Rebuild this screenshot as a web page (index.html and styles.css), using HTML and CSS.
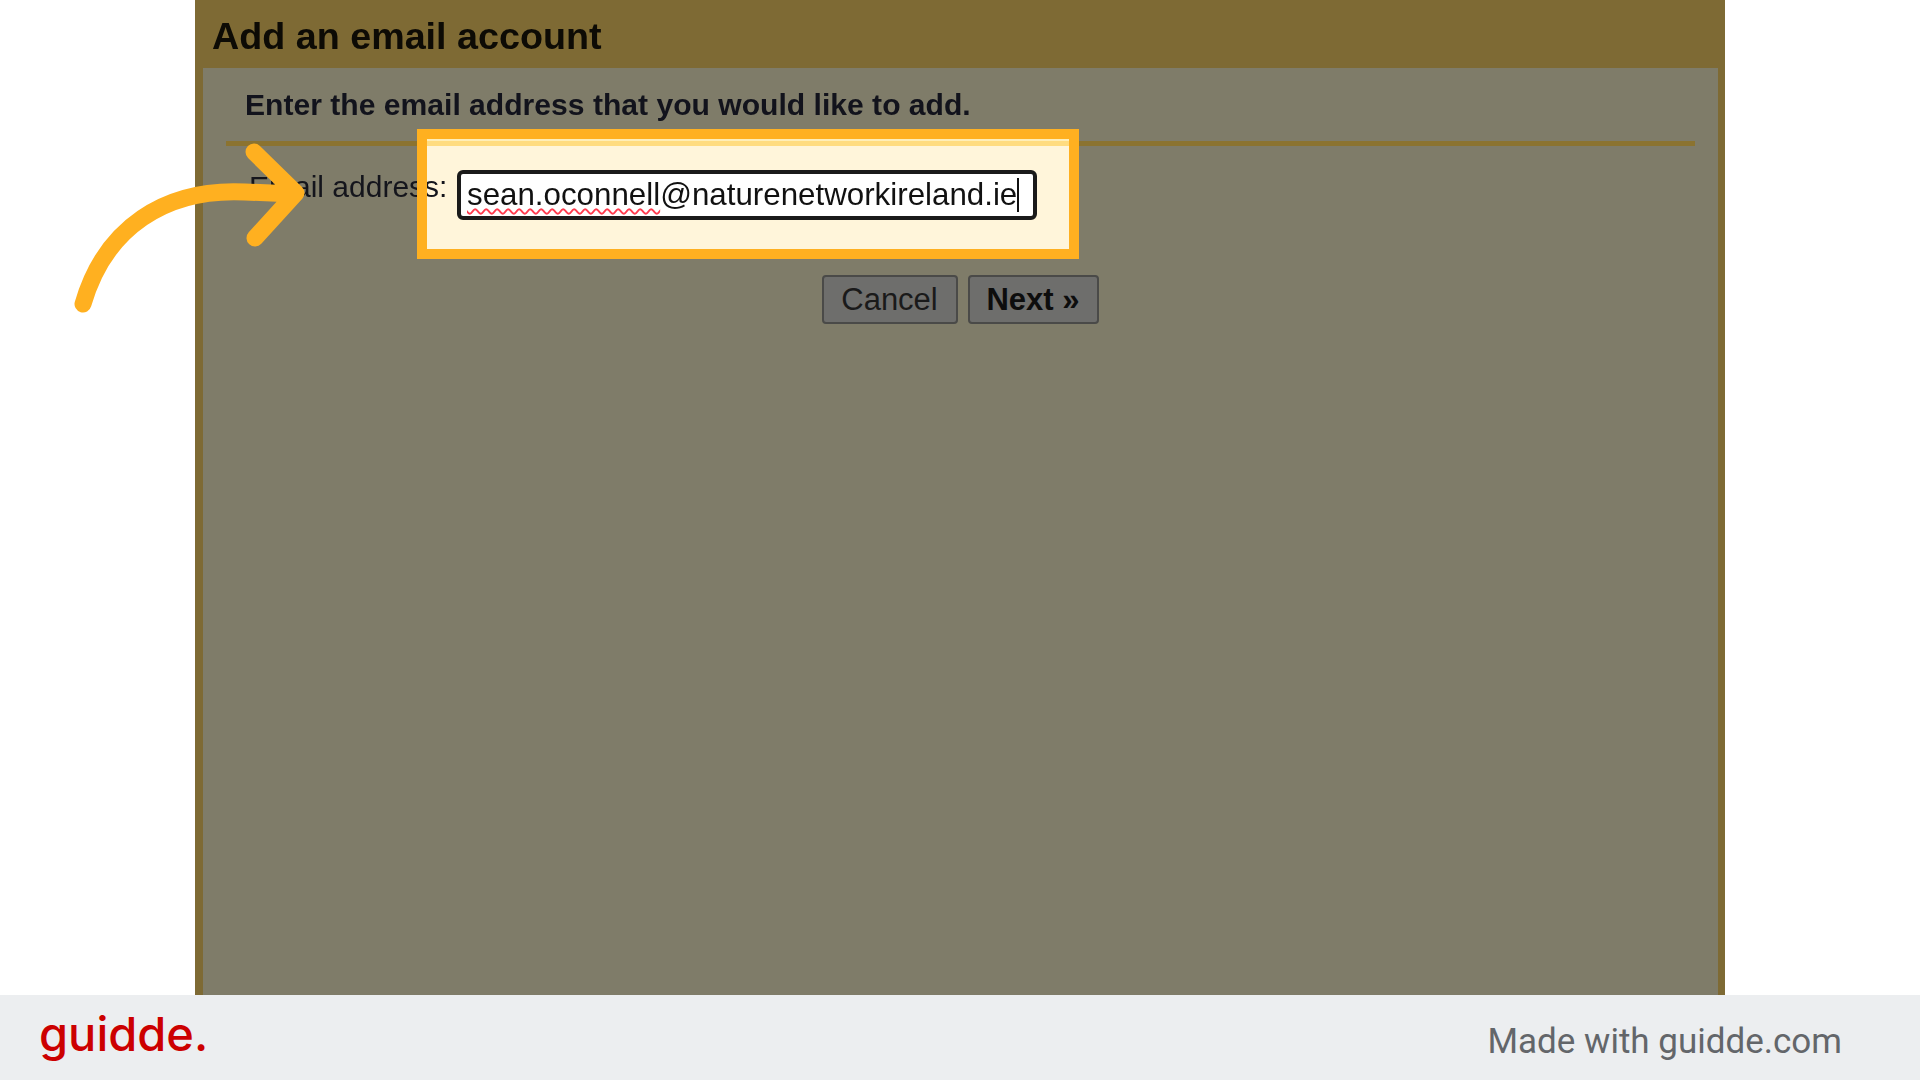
FILE: index.html
```html
<!DOCTYPE html>
<html lang="en">
<head>
<meta charset="utf-8">
<title>Add an email account</title>
<link rel="stylesheet" href="styles.css">
</head>
<body>
<main class="stage">
  <section class="panel">
    <h1 class="panel-title">Add an email account</h1>
    <div class="panel-body">
      <p class="intro">Enter the email address that you would like to add.</p>
      <hr class="rule">
      <div class="form-row">
        <label class="field-label">Email address:</label>
        <div class="field"><span class="typo">sean.oconnell</span>@naturenetworkireland.ie<span class="caret"></span></div>
      </div>
      <div class="actions">
        <button class="btn" type="button">Cancel</button>
        <button class="btn btn-primary" type="button">Next »</button>
      </div>
      <div class="spot"><div class="spot-line"></div></div>
    </div>
  </section>
  <svg class="arrow" width="320" height="320" viewBox="0 0 320 320" aria-hidden="true">
    <path d="M83 304C105 228 165 188 245 192L294 194M254 152L296 193L255 238"/>
  </svg>
</main>
<footer class="footer">
  <span class="logo">guidde.</span>
  <span class="credit">Made with guidde.com</span>
</footer>
</body>
</html>
```
FILE: styles.css
```css
* { box-sizing: border-box; }
html, body { margin: 0; height: 100%; }
body {
  width: 1920px;
  height: 1080px;
  overflow: hidden;
  display: flex;
  flex-direction: column;
  background: #fff;
  font-family: "Liberation Sans", Arial, sans-serif;
}
.stage {
  flex: 0 0 995px;
  position: relative;
  padding: 0 195px;
}
.panel {
  width: 1530px;
  height: 995px;
  display: flex;
  flex-direction: column;
  background: #7e6a34;
  padding: 0 7px 0 8px;
}
.panel-title {
  flex: 0 0 68px;
  margin: 0 -8px;
  padding: 4px 0 0 17px;
  display: flex;
  align-items: center;
  font-size: 37.7px;
  font-weight: 700;
  color: #0d0b05;
  filter: blur(0.4px);
}
.panel-body {
  flex: 1;
  position: relative;
  background: #7f7c69;
  padding: 20px 23px 0;
}
.intro {
  margin: 0 0 0 19px;
  font-size: 30.1px;
  font-weight: 700;
  line-height: 34px;
  color: #12131c;
  filter: blur(0.4px);
}
.rule {
  margin: 19px 0 0;
  height: 5px;
  border: 0;
  background: #8b7330;
}
.form-row {
  display: flex;
  align-items: flex-start;
  margin-top: 24px;
  padding-left: 23px;
}
.field-label {
  position: relative;
  z-index: 2;
  width: 208px;
  font-size: 30px;
  line-height: 34px;
  color: #14151c;
  filter: blur(0.4px);
}
.field {
  position: relative;
  z-index: 2;
  width: 580px;
  height: 50px;
  padding-left: 6px;
  display: flex;
  align-items: center;
  border: 4px solid #1a1a1a;
  border-radius: 6px;
  background: #fff;
  font-size: 31.3px;
  color: #111;
  white-space: nowrap;
  filter: blur(0.3px);
}
.typo {
  text-decoration: underline wavy #ff3b4e 2px;
  text-underline-offset: 3px;
}
.caret {
  width: 2px;
  height: 34px;
  background: #111;
}
.actions {
  display: flex;
  justify-content: center;
  gap: 10px;
  margin-top: 55px;
}
.btn {
  height: 49px;
  padding: 0 1px 0 0;
  border: 2px solid #4a4a48;
  border-radius: 4px;
  background: #6e6e6c;
  font-family: inherit;
  font-size: 31px;
  color: #1a1a1a;
  width: 136px;
}
.btn-primary {
  width: 131px;
  font-weight: 700;
  color: #0d0d0d;
}
.spot {
  position: absolute;
  left: 214px;
  top: 61px;
  width: 662px;
  height: 130px;
}
.spot::before {
  content: "";
  position: absolute;
  inset: 0;
  z-index: 1;
  background: #fff5da;
}
.spot::after {
  content: "";
  position: absolute;
  inset: 0;
  z-index: 3;
  border: 10px solid #ffb020;
}
.spot-line {
  position: absolute;
  z-index: 2;
  left: 0;
  right: 0;
  top: 10px;
  height: 7px;
  background: #ffdc80;
  border-top: 2px solid #ffeeb8;
}
.arrow {
  position: absolute;
  left: 0;
  top: 0;
  z-index: 5;
  fill: none;
  stroke: #ffb020;
  stroke-width: 17;
  stroke-linecap: round;
  stroke-linejoin: round;
}
.footer {
  flex: 0 0 85px;
  display: flex;
  align-items: center;
  justify-content: space-between;
  padding: 0 78px 0 39px;
  background: #eceef0;
}
.logo {
  font-family: Inter, sans-serif;
  font-size: 47px;
  font-weight: 500;
  color: #cc0000;
  line-height: 1;
  padding-bottom: 8px;
}
.credit {
  font-family: Roboto, sans-serif;
  font-size: 35px;
  color: #63666a;
  padding-top: 7px;
}
```
